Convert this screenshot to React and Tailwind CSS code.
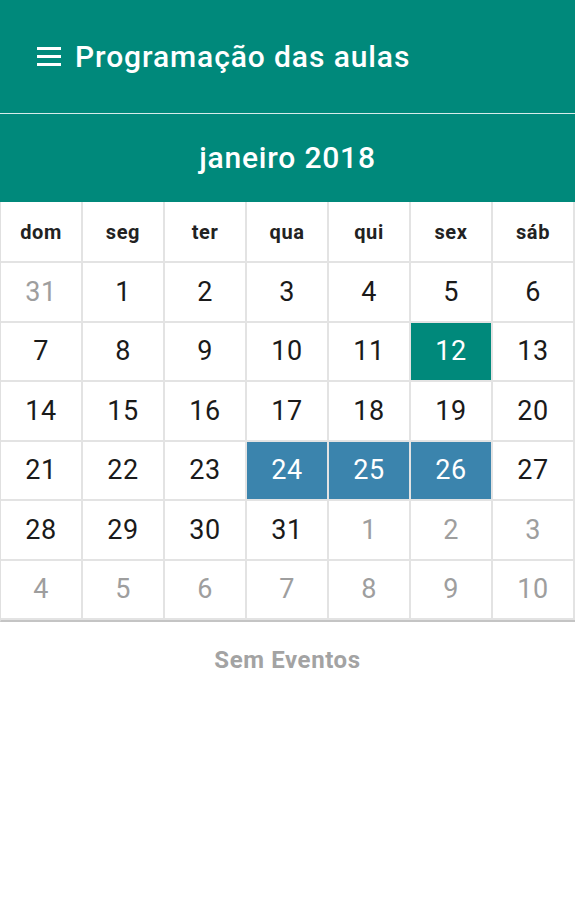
import React from "react";

const teal = "bg-[#00897b]";

const weeks = [
  [[31, 1], [1], [2], [3], [4], [5], [6]],
  [[7], [8], [9], [10], [11], [12, 0, "g"], [13]],
  [[14], [15], [16], [17], [18], [19], [20]],
  [[21], [22], [23], [24, 0, "b"], [25, 0, "b"], [26, 0, "b"], [27]],
  [[28], [29], [30], [31], [1, 1], [2, 1], [3, 1]],
  [[4, 1], [5, 1], [6, 1], [7, 1], [8, 1], [9, 1], [10, 1]],
];

const days = ["dom", "seg", "ter", "qua", "qui", "sex", "sáb"];

export default function App() {
  return (
    <div className="w-[575px] h-[900px] bg-white font-['Roboto',sans-serif]">
      <div className={`${teal} h-[113px] flex items-center pl-[37px]`}>
        <svg width="24" height="20" viewBox="0 0 24 20" className="mr-[14px] mt-[-1px]">
          <rect x="0" y="1" width="24" height="3" fill="white" />
          <rect x="0" y="9" width="24" height="3" fill="white" />
          <rect x="0" y="17" width="24" height="3" fill="white" />
        </svg>
        <span className="text-white text-[30px] font-medium leading-none tracking-[0.9px]">
          Programação das aulas
        </span>
      </div>
      <div className="h-px bg-[#d7ecea]" />
      <div className={`${teal} h-[88px] flex items-center justify-center`}>
        <span className="text-white text-[30px] font-medium leading-none tracking-[0.8px]">janeiro 2018</span>
      </div>
      <div className="border-l border-[#e0e0e0] border-b-2 border-b-[#c4c4c4]">
        <div className="grid grid-cols-7 h-[61px]">
          {days.map((d) => (
            <div
              key={d}
              className="border-r-2 border-b-2 border-[#e3e3e3] flex items-center justify-center text-[20px] font-bold tracking-[0.6px] text-[#222]"
            >
              {d}
            </div>
          ))}
        </div>
        {weeks.map((w, i) => (
          <div key={i} className="grid grid-cols-7 h-[59.5px]">
            {w.map(([n, other, hl], j) => {
              const bg = hl === "g" ? "bg-[#00897b] text-white" : hl === "b" ? "bg-[#3b84ad] text-white" : other ? "text-[#9e9e9e]" : "text-[#1a1a1a]";
              return (
                <div key={j} className={`border-r-2 border-b-2 border-[#e3e3e3] ${i === 5 ? "border-b-0" : ""}`}>
                  <div className={`h-full flex items-center justify-center text-[27px] tracking-[0.5px] ${bg}`}>{n}</div>
                </div>
              );
            })}
          </div>
        ))}
      </div>
      <div className="flex justify-center pt-[20px]">
        <span className="text-[24px] font-bold tracking-[0.6px] text-[#a3a3a3]">Sem Eventos</span>
      </div>
    </div>
  );
}
